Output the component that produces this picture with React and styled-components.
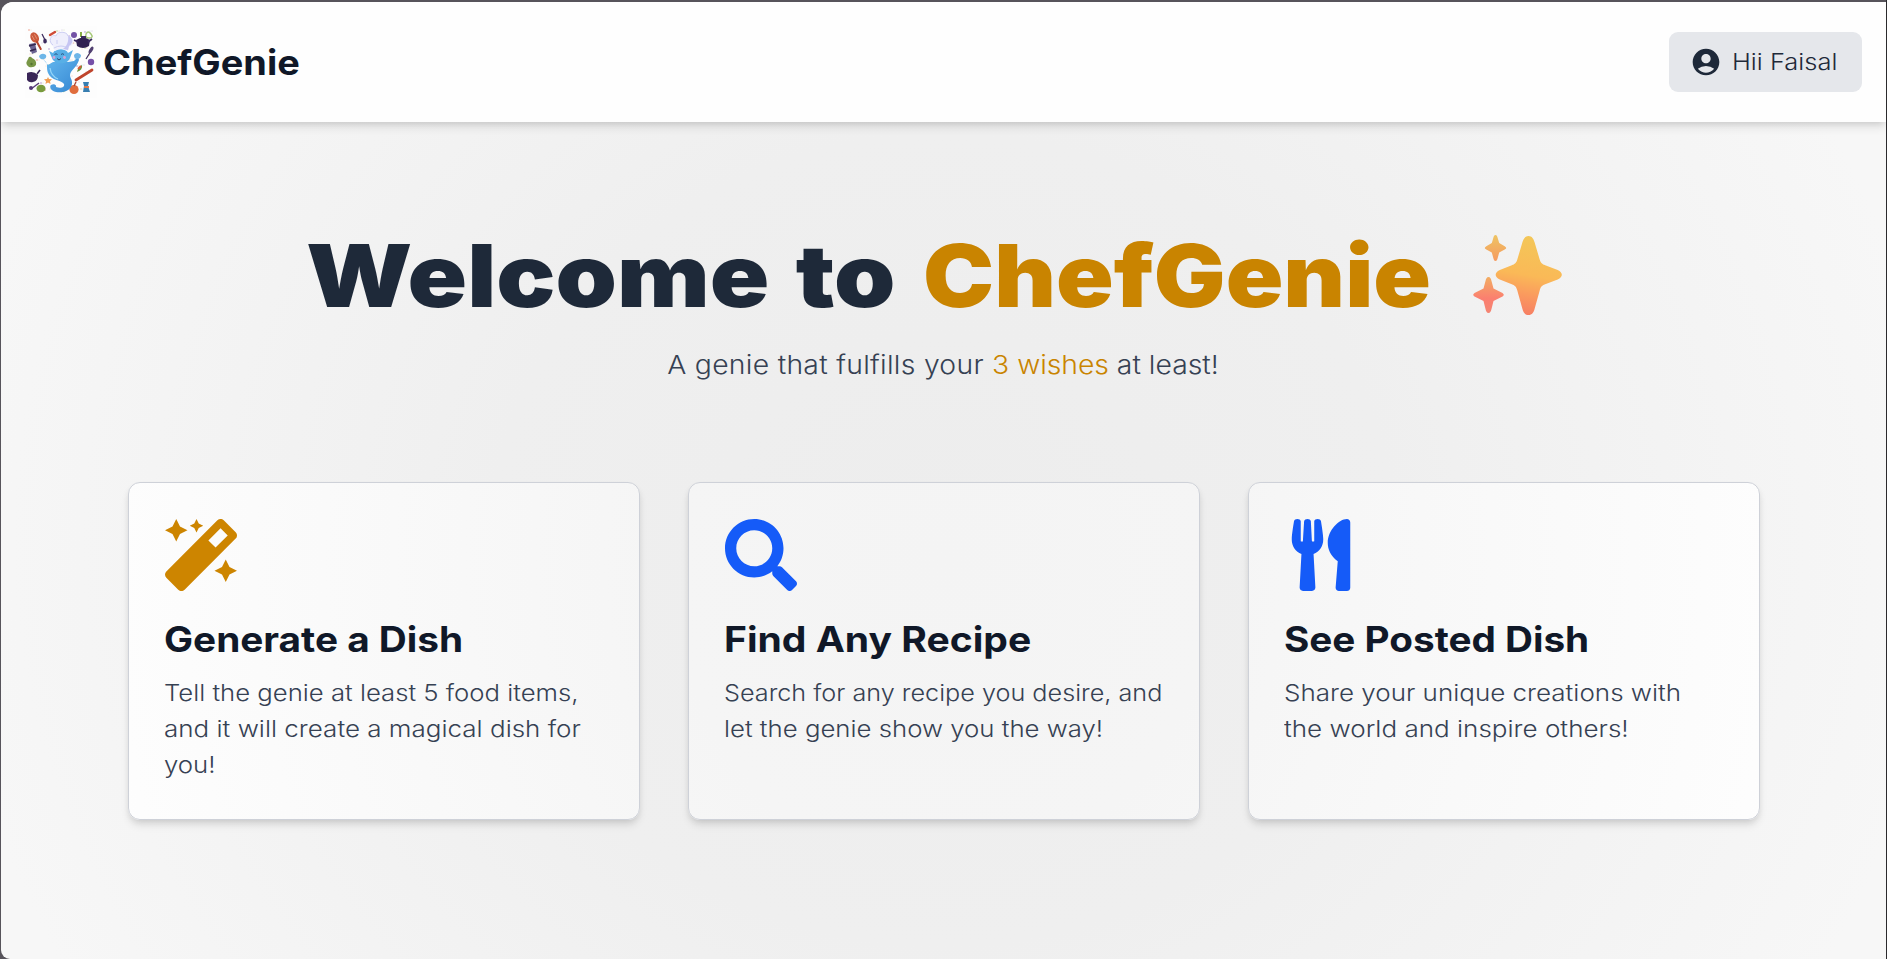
import React from "react";
import styled, { createGlobalStyle } from "styled-components";
import { FaMagic, FaSearch, FaUtensils } from "react-icons/fa";
import { MdAccountCircle } from "react-icons/md";

const GlobalStyle = createGlobalStyle`
  *, *::before, *::after { box-sizing: border-box; }
  html, body { margin: 0; height: 100%; background: #57545b; }
  body { overflow: hidden; font-family: Inter, "Open Sans", sans-serif; color: #1e2939; }
  #root { height: 100%; }
`;

const Frame = styled.div`
  height: 100vh;
  padding: 2px 1px 0 1px;
  background: linear-gradient(90deg, #57545b 1886px, #2b2a2d 1886px);
`;

const Page = styled.div`
  height: 100%;
  display: flex;
  flex-direction: column;
  overflow: hidden;
  border-radius: 12px 0 0 9px;
  background: radial-gradient(ellipse 1000px 900px at 943px 540px, #ededed 0%, #efefef 45%, #f7f7f7 100%) fixed;
`;

/* Widens the letterforms horizontally from their left edge. */
const Wide = styled.span`
  display: inline-block;
  transform: scaleX(${(p) => p.$x});
  transform-origin: ${(p) => p.$origin || "left"} center;
  white-space: nowrap;
`;

const Header = styled.header`
  flex: none;
  height: 120px;
  display: flex;
  align-items: center;
  justify-content: space-between;
  padding: 0 24px;
  background: #fefefe;
  box-shadow: 0 6px 9px -1px rgba(0, 0, 0, 0.1), 0 3px 6px -2px rgba(0, 0, 0, 0.1);
`;

const Brand = styled.div`
  display: flex;
  align-items: center;
  gap: 6px;
`;

const BrandName = styled.span`
  font-size: 35px;
  line-height: 48px;
  font-weight: 700;
  color: #101828;
`;

const UserButton = styled.button`
  width: 193px;
  height: 60px;
  display: flex;
  align-items: center;
  gap: 10px;
  padding: 0 0 0 21px;
  border: 0;
  border-radius: 9px;
  background: #e5e7eb;
  color: #1e2939;
  font: 300 23px/36px Inter, sans-serif;
  svg { width: 32px; height: 32px; flex: none; }
`;

const Hero = styled.section`
  display: flex;
  flex-direction: column;
  align-items: center;
  padding-top: 109px;
`;

const Heading = styled.h1`
  margin: 0;
  display: grid;
  grid-template-columns: 617px 1fr 90px;
  align-items: center;
  width: 1279px;
  height: 90px;
  padding: 0 20px 0 2px;
  font-size: 87px;
  line-height: 90px;
  font-weight: 900;
  color: #1e2939;
`;

const HeadingLead = styled.span`
  word-spacing: 6px;
`;

const HeadingAccent = styled.span`
  color: #c98400;
`;

const SparkleIcon = styled.svg`
  width: 90px;
  height: 82px;
`;

const Tagline = styled.p`
  margin: 23px 0 0;
  font-size: 26px;
  line-height: 42px;
  font-weight: 300;
  color: #364153;
`;

const TaglineLead = styled.span`
  letter-spacing: 0.25px;
`;

const Wishes = styled.span`
  color: #c98400;
  letter-spacing: -0.05px;
`;

const Cards = styled.main`
  display: grid;
  grid-template-columns: repeat(3, 512px);
  gap: 48px;
  justify-content: center;
  margin-top: 96px;
`;

const Card = styled.article`
  height: 338px;
  padding: 36px 35px 35px 36px;
  border: 1px solid #ced1d8;
  border-radius: 12px;
  background: radial-gradient(ellipse 900px 1050px at 943px 560px, #f4f4f4 0%, #f5f5f5 30%, #fefefe 100%) fixed;
  box-shadow: 0 6px 9px -1px rgba(0, 0, 0, 0.1), 0 3px 6px -2px rgba(0, 0, 0, 0.1);
`;

const CardIcon = styled.div`
  height: 72px;
  color: ${(p) => p.$color};
  svg { display: block; width: 72px; height: 72px; }
`;

const CardTitle = styled.h2`
  margin: 24px 0 12px -1px;
  font-size: 35px;
  line-height: 48px;
  font-weight: 700;
  color: #101828;
`;

const CardText = styled.p`
  margin: 0 0 0 -1px;
  display: flex;
  flex-direction: column;
  align-items: flex-start;
  font-size: 23px;
  line-height: 36px;
  font-weight: 300;
  color: #364153;
`;

function Logo() {
  const dots = [];
  const colors = ["#e86a4a", "#f4b35e", "#7fb2e8", "#8a5fb8", "#9ac05a"];
  for (let i = 0; i < 90; i++) {
    dots.push(
      <circle key={i} cx={4 + ((i * 37) % 64)} cy={4 + ((i * 23 + (i >> 2) * 7) % 64)} r={i % 4 ? 0.45 : 0.75} fill={colors[i % 5]} opacity="0.7" />
    );
  }
  return (
    <svg width="72" height="72" viewBox="0 0 72 72">
      <defs>
        <linearGradient id="genie" x1="0" y1="0" x2="1" y2="1">
          <stop offset="0" stopColor="#67baf0" />
          <stop offset="1" stopColor="#3486d2" />
        </linearGradient>
      </defs>
      <rect width="72" height="72" fill="#fdfdfd" />
      {dots}
      <g transform="rotate(-28 11 12)">
        <ellipse cx="10" cy="11" rx="4" ry="5.5" fill="#cb5a3c" />
        <path d="M10 16v8" stroke="#b8452e" strokeWidth="2" strokeLinecap="round" />
        <path d="M8.6 8v5M11.4 8v5" stroke="#e9a184" strokeWidth="0.7" />
      </g>
      <path d="M17 8l4 8" stroke="#3c2b5e" strokeWidth="1.2" />
      <ellipse cx="20" cy="15" rx="1.8" ry="2.6" fill="#3c2b5e" />
      <path d="M25 9l5-3" stroke="#cf4c37" strokeWidth="2.4" strokeLinecap="round" />
      <path d="M4 18l6-1 2 9-5 2z" fill="#6b6392" />
      <path d="M4 20l7-2M5 25l6-2" stroke="#34274f" strokeWidth="1.5" />
      <circle cx="49" cy="9" r="3" fill="#7352a5" />
      <path d="M56 6v5" stroke="#86ac46" strokeWidth="2" />
      <path d="M61 8q2-4 5 0t-2 4q-4 0-3-4z" fill="none" stroke="#a6c878" strokeWidth="1.4" />
      <path d="M51 14q7-5 14 0l-1 6q-6 4-12 0z" fill="#30214f" />
      <path d="M49 14l4 2M67 13l-4 3M56 11h5" stroke="#3b2a60" strokeWidth="1.8" />
      <path d="M61 33l5-8" stroke="#3c2b5e" strokeWidth="1.2" />
      <ellipse cx="66" cy="24" rx="1.7" ry="3.8" transform="rotate(30 66 24)" fill="#514071" />
      <circle cx="66" cy="36" r="3.2" fill="#7650a8" />
      <path d="M4 31q2-1 3 1 5 2 4 7-2 3-7 2-4-3-2-6 1-2 2-4z" fill="#789646" />
      <circle cx="6.5" cy="38" r="1.2" fill="#557432" />
      <path d="M52 46q1-5 5-7 1 5-5 7z" fill="#67943a" />
      <path d="M53 43l3-3" stroke="#d8593a" strokeWidth="2" />
      <path d="M51 54l16-10" stroke="#bf442c" strokeWidth="2.8" strokeLinecap="round" />
      <path d="M2 47q6-3 11 2 0 6-5 7-4 1-6-2z" fill="#3a2658" />
      <path d="M12 48l3-4" stroke="#3a2658" strokeWidth="1.6" />
      <path d="M6 63l8-6" stroke="#553877" strokeWidth="1.4" />
      <circle cx="6" cy="62" r="2" fill="#553877" />
      <path d="M23 51l1 2 3 .3-2 2 .5 2.7-2.5-1.4-2.5 1.4.5-2.7-2-2 3-.3z" fill="#f09c50" />
      <ellipse cx="16" cy="62.5" rx="4.5" ry="3.8" fill="#789b3d" />
      <path d="M35 65q3-4 4 1" fill="none" stroke="#9abd69" strokeWidth="1.5" />
      <circle cx="49" cy="63.5" r="4.6" fill="#e06d3d" />
      <path d="M49 60l2-4" stroke="#ad402c" strokeWidth="1.3" />
      <path d="M58 56h6l-1 4 2 6h-7l1-6z" fill="#387eb0" />
      <path d="M59 61h5" stroke="#e57845" strokeWidth="2" />
      <path d="M17 32l6 7 5-3h15l6-1 4-4 1 3c-2 6-5 8-8 12-3 5 2 7 1 12-1 7-9 9-16 8-5-1-7-5-5-7 3-2 6 0 5 2 5 2 9 0 8-3-2-4-13-3-16-11-2-5 0-8-2-11z" fill="url(#genie)" />
      <path d="M24 25l4 2c2-5 13-5 15 0l5-3-3 8c-2 7-16 7-18 0z" fill="#58afe6" />
      <path d="M25 42q1 8 8 11" fill="none" stroke="#94d5f8" strokeWidth="1.3" />
      <path d="M29.500 28.500q1.500-1.500 3 0M36 28.500q1.500-1.500 3 0" fill="none" stroke="#244975" strokeWidth="0.900" />
      <path d="M32 32.500q2 3 4 0" fill="none" stroke="#244975" strokeWidth="1" />
      <circle cx="29" cy="31.500" r="1.400" fill="#d7a3d6" />
      <circle cx="39.500" cy="31.500" r="1.400" fill="#d7a3d6" />
      <path d="M28 20c-5-3-3-11 3-9 1-6 12-6 13 0 6 0 6 8 0 10l-1 4q-7-4-13 0z" fill="#efeffc" />
      <path d="M43 10c5 1 6 7 1 10l-1 4-5-1c4-3 6-8 5-13z" fill="#c6c5f3" />
      <path d="M29 22q7-4 14 0M32 14v4M28 19c-5-3-3-11 3-9 1-5 11-5 12 0" fill="none" stroke="#c7c9f0" strokeWidth="0.900" />
      <path d="M14 30q3-4 7-1 1 3-2 4-4 1-5-3zM49 29q3-4 7 0 0 4-4 4-3 0-3-4z" fill="#6db6e8" />
    </svg>
  );
}

function Sparkles() {
  return (
    <SparkleIcon viewBox="0 0 90 82" aria-label="sparkles">
      <defs>
        <linearGradient id="spark" x1="0.600" y1="0" x2="0.450" y2="1">
          <stop offset="0" stopColor="#f3c758" />
          <stop offset="0.500" stopColor="#fab957" />
          <stop offset="0.750" stopColor="#fa9a5e" />
          <stop offset="1" stopColor="#f77f64" />
        </linearGradient>
        <linearGradient id="sparkTop" x1="0" y1="0" x2="0" y2="1">
          <stop offset="0" stopColor="#eec463" />
          <stop offset="1" stopColor="#f69a60" />
        </linearGradient>
        <linearGradient id="sparkLow" x1="0" y1="0" x2="0" y2="1">
          <stop offset="0" stopColor="#f2ad62" />
          <stop offset="0.600" stopColor="#fb7f70" />
          <stop offset="1" stopColor="#f48573" />
        </linearGradient>
      </defs>
      <path d="M55.500 1c3.500 0 5.100 3 6 6l5.200 17.500c1 3.500 2.500 4.600 5.500 5.800l12.500 4.700c5.500 2.600 5.500 7 0 9.600l-12.500 4.700c-3.500 1.400-4.600 2.800-5.500 6.200l-5 18c-1 4-2.600 6.500-6.200 6.500s-5.200-2.500-6.200-6.500l-5-18c-1-3.400-2-4.800-5.500-6.200l-12-4.700c-5.500-2.600-5.500-7 0-9.600l12-4.700c3-1.200 4.500-2.300 5.500-5.800l5.200-17.500c.9-3 2.500-6 6-6z" fill="url(#spark)" />
      <path d="M22.500 0c1.300 0 1.900 1.500 2.200 3l1.500 5 5.500 3.200c2 1.300 2 2.300 0 3.400l-5.500 2.900-1.500 5.500c-.5 2-1 3-2.200 3s-1.700-1-2.200-3l-1.500-5.500-5.500-2.900c-2-1.100-2-2.100 0-3.400l5.500-3.200 1.500-5c.3-1.500.9-3 2.200-3z" fill="url(#sparkTop)" />
      <path d="M15.500 42c1.800 0 2.500 2 3 4l2 7.500 8 4c3 1.500 3 3 0 4.500l-8 4-2 8c-.5 2-1.200 4-3 4s-2.500-2-3-4l-2-8-8-4c-3-1.500-3-3 0-4.500l8-4 2-7.500c.5-2 1.200-4 3-4z" fill="url(#sparkLow)" />
    </SparkleIcon>
  );
}

const cards = [
  {
    icon: FaMagic,
    color: "#cd8500",
    title: "Generate a Dish",
    x: 1.107,
    lines: [
      ["Tell the genie at least 5 food items,", 1.117],
      ["and it will create a magical dish for", 1.13],
      ["you!", 1.12],
    ],
  },
  {
    icon: FaSearch,
    color: "#155bf8",
    title: "Find Any Recipe",
    x: 1.116,
    lines: [
      ["Search for any recipe you desire, and", 1.096],
      ["let the genie show you the way!", 1.12],
    ],
  },
  {
    icon: FaUtensils,
    color: "#155bf8",
    title: "See Posted Dish",
    x: 1.105,
    lines: [
      ["Share your unique creations with", 1.13],
      ["the world and inspire others!", 1.132],
    ],
  },
];

export default function App() {
  return (
    <Frame>
      <GlobalStyle />
      <Page>
        <Header>
          <Brand>
            <Logo />
            <BrandName>
              <Wide $x={1.083}>ChefGenie</Wide>
            </BrandName>
          </Brand>
          <UserButton>
            <MdAccountCircle />
            <Wide $x={1.108}>Hii Faisal</Wide>
          </UserButton>
        </Header>
        <Hero>
          <Heading>
            <HeadingLead>
              <Wide $x={1.13}>Welcome to</Wide>
            </HeadingLead>
            <HeadingAccent>
              <Wide $x={1.094}>ChefGenie</Wide>
            </HeadingAccent>
            <Sparkles />
          </Heading>
          <Tagline>
            <Wide $x={1.09} $origin="center">
              <TaglineLead>A genie that fulfills your </TaglineLead>
              <Wishes>3 wishes</Wishes> at least!
            </Wide>
          </Tagline>
        </Hero>
        <Cards>
          {cards.map(({ icon: Icon, color, title, x, lines }) => (
            <Card key={title}>
              <CardIcon $color={color}>
                <Icon />
              </CardIcon>
              <CardTitle>
                <Wide $x={x}>{title}</Wide>
              </CardTitle>
              <CardText>
                {lines.map(([line, lineX]) => (
                  <Wide key={line} $x={lineX}>
                    {line}
                  </Wide>
                ))}
              </CardText>
            </Card>
          ))}
        </Cards>
      </Page>
    </Frame>
  );
}
